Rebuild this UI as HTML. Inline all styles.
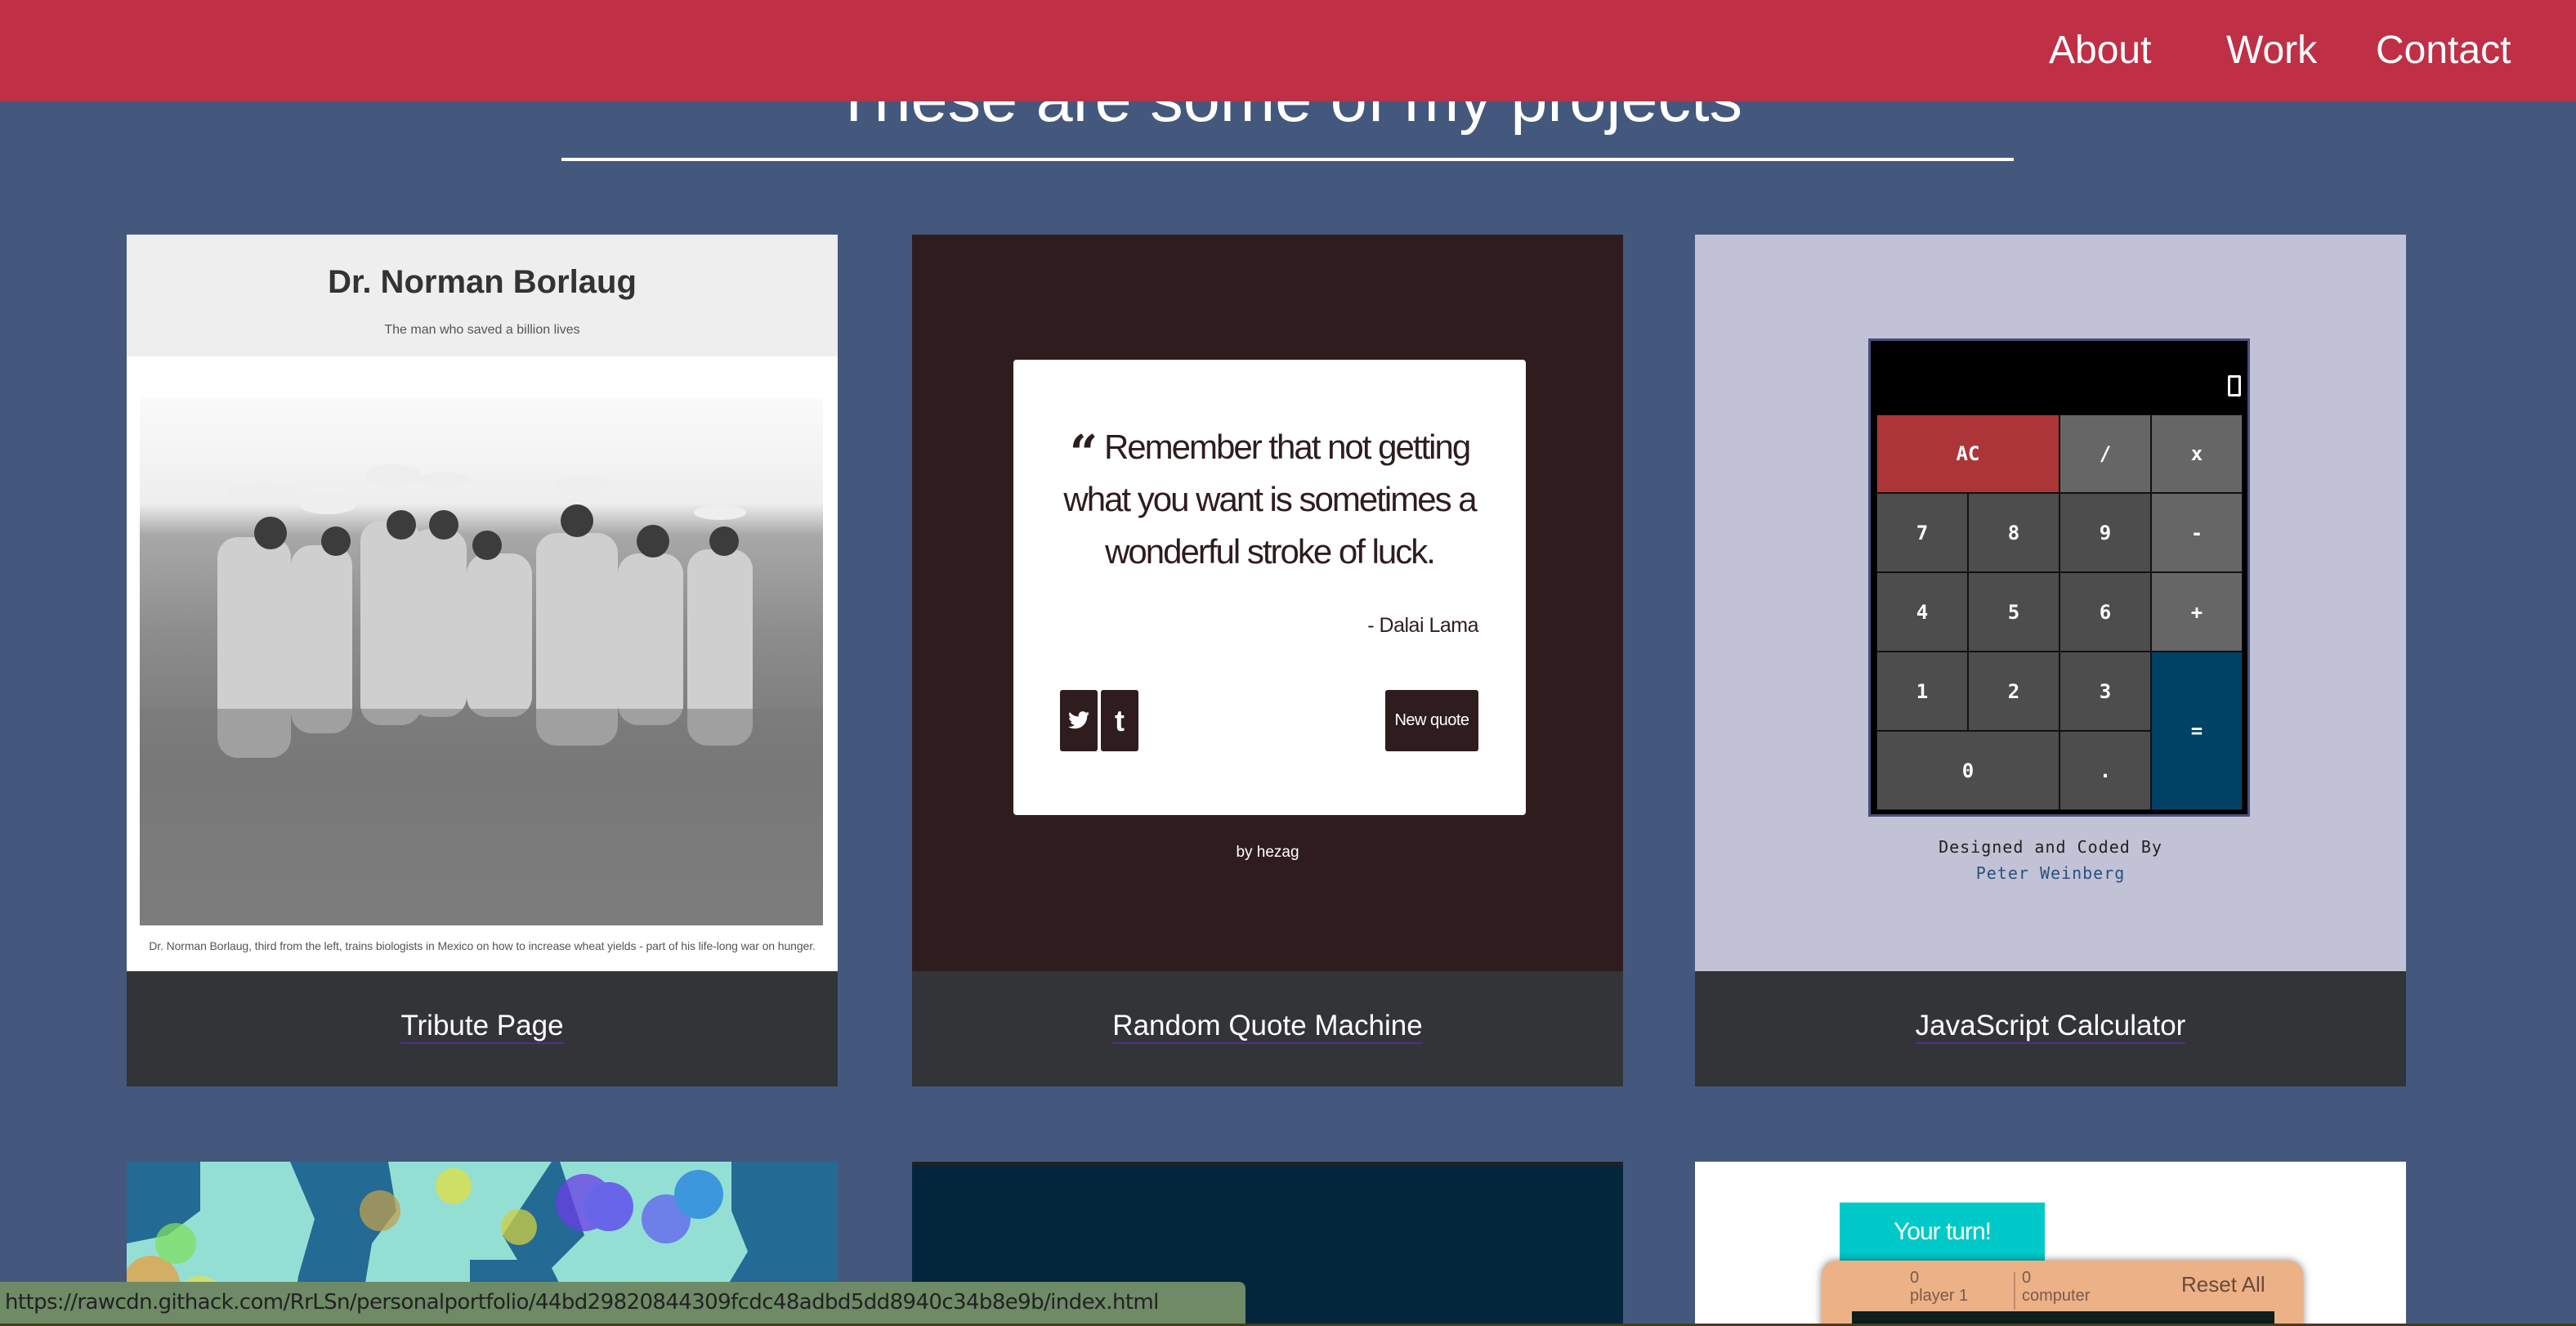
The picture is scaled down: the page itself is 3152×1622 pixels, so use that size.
<!DOCTYPE html>
<html><head><meta charset="utf-8"><style>
*{margin:0;padding:0;box-sizing:border-box}
html,body{width:3152px;height:1622px;overflow:hidden}
body{background:#44587d;font-family:"Liberation Sans",Arial,sans-serif;position:relative}
.abs{position:absolute}
.hdr{left:0;top:0;width:3152px;height:124px;background:#bf3046;z-index:5}
.nav{color:#fff;font-size:48px;top:34px;line-height:56px}
.title{left:0;width:3152px;top:76px;text-align:center;color:#fff;font-size:81px;line-height:90px;z-index:1}
.rule{left:687px;top:193px;width:1777px;height:4px;background:#fff}
.card{width:870px;height:1042px;top:287px;overflow:hidden}
.img{position:absolute;left:0;top:0;width:870px;height:901px;overflow:hidden}
.cap{position:absolute;left:0;top:901px;width:870px;height:141px;background:#333438;color:#fff;font-size:35px;text-align:center;line-height:133px}
.cap span{border-bottom:2px solid #5a2a8a;line-height:40px;display:inline-block}
.c2{width:870px;height:220px;top:1421px;overflow:hidden}
.calc div{position:absolute;color:#fff;font-family:"DejaVu Sans Mono","Liberation Mono",monospace;font-size:24px;font-weight:bold;display:flex;align-items:center;justify-content:center;border:1px solid #111}
</style></head><body>
<div class="abs hdr">
 <div class="abs nav" style="left:2507px">About</div>
 <div class="abs nav" style="left:2724px">Work</div>
 <div class="abs nav" style="left:2907px">Contact</div>
</div>
<div class="abs title">These are some of my projects</div>
<div class="abs rule"></div>

<!-- card 1 -->
<div class="abs card" style="left:155px">
 <div class="img" style="background:#fff">
  <div class="abs" style="left:0;top:0;width:870px;height:149px;background:#eeeeee"></div>
  <div class="abs" style="left:0;top:36px;width:870px;text-align:center;font-size:40px;font-weight:bold;color:#333">Dr. Norman Borlaug</div>
  <div class="abs" style="left:0;top:108px;width:870px;text-align:center;font-size:16px;color:#555">The man who saved a billion lives</div>
  <div class="abs" style="left:16px;top:200px;width:836px;height:645px;background:linear-gradient(180deg,#fafafa 0%,#eeeeee 20%,#a8a8a8 26%,#8c8c8c 45%,#767676 70%,#808080 100%)"></div>
  <svg class="abs" style="left:16px;top:200px" width="836" height="645">
   <g fill="#cfcfcf">
    <rect x="95" y="170" width="90" height="270" rx="25"/><rect x="185" y="180" width="75" height="230" rx="25"/>
    <rect x="270" y="150" width="75" height="250" rx="25"/><rect x="330" y="160" width="70" height="230" rx="25"/>
    <rect x="400" y="190" width="80" height="200" rx="25"/><rect x="485" y="165" width="100" height="260" rx="25"/>
    <rect x="585" y="190" width="80" height="210" rx="25"/><rect x="670" y="185" width="80" height="240" rx="25"/>
   </g>
   <g fill="#eee"><ellipse cx="150" cy="115" rx="45" ry="12"/><ellipse cx="230" cy="130" rx="35" ry="12"/><ellipse cx="310" cy="95" rx="35" ry="14"/><ellipse cx="372" cy="100" rx="34" ry="10"/><ellipse cx="540" cy="105" rx="34" ry="10"/><ellipse cx="710" cy="140" rx="32" ry="9"/></g>
   <g fill="#3c3c3c"><circle cx="160" cy="165" r="20"/><circle cx="240" cy="175" r="18"/><circle cx="320" cy="155" r="18"/><circle cx="372" cy="155" r="18"/><circle cx="425" cy="180" r="18"/><circle cx="535" cy="150" r="20"/><circle cx="628" cy="175" r="20"/><circle cx="715" cy="175" r="18"/></g>
   <rect x="0" y="380" width="836" height="265" fill="#7a7a7a" opacity=".55"/>
  </svg>
  <div class="abs" style="left:0;top:862px;width:870px;text-align:center;font-size:14px;color:#555;white-space:nowrap;letter-spacing:-0.1px">Dr. Norman Borlaug, third from the left, trains biologists in Mexico on how to increase wheat yields - part of his life-long war on hunger.</div>
 </div>
 <div class="cap"><span>Tribute Page</span></div>
</div>

<!-- card 2 -->
<div class="abs card" style="left:1116px">
 <div class="img" style="background:#2f1c1f">
  <div class="abs" style="left:124px;top:153px;width:627px;height:557px;background:#fff;border-radius:4px"></div>
  <div class="abs" style="left:124px;top:228px;width:627px;text-align:center;font-size:42px;line-height:64px;color:#2f1c1f;letter-spacing:-2px"><b style="font-family:'DejaVu Serif',serif;font-size:60px;line-height:40px;vertical-align:-14px">&#8220;</b> Remember that not getting<br>what you want is sometimes a<br>wonderful stroke of luck.</div>
  <div class="abs" style="left:400px;top:464px;width:293px;text-align:right;font-size:25px;color:#2f1c1f;letter-spacing:-0.5px">- Dalai Lama</div>
  <div class="abs" style="left:181px;top:557px;width:46px;height:75px;background:#2f1c1f;border-radius:3px;text-align:center">
   <svg width="26" height="24" viewBox="0 0 24 20" style="margin-top:25px"><path fill="#fff" d="M24 2.4a9.8 9.8 0 0 1-2.8.8A4.9 4.9 0 0 0 23.3.4a9.9 9.9 0 0 1-3.1 1.2A4.9 4.9 0 0 0 11.8 6 14 14 0 0 1 1.7.9a4.9 4.9 0 0 0 1.5 6.6A4.9 4.9 0 0 1 1 6.9v.1a4.9 4.9 0 0 0 3.9 4.8 4.9 4.9 0 0 1-2.2.1 4.9 4.9 0 0 0 4.6 3.4A9.9 9.9 0 0 1 0 17.3 14 14 0 0 0 7.5 19.5c9.1 0 14-7.5 14-14v-.6A10 10 0 0 0 24 2.4z"/></svg>
  </div>
  <div class="abs" style="left:231px;top:557px;width:46px;height:75px;background:#2f1c1f;border-radius:3px;color:#fff;font-size:36px;font-weight:bold;text-align:center;line-height:75px">t</div>
  <div class="abs" style="left:579px;top:557px;width:114px;height:75px;background:#2f1c1f;border-radius:3px;color:#fff;font-size:20px;text-align:center;line-height:75px;letter-spacing:-0.5px">New quote</div>
  <div class="abs" style="left:0;top:745px;width:870px;text-align:center;color:#fff;font-size:19px">by hezag</div>
 </div>
 <div class="cap"><span>Random Quote Machine</span></div>
</div>

<!-- card 3 -->
<div class="abs card" style="left:2074px">
 <div class="img" style="background:#c1c2d6">
  <div class="abs calc" style="left:212px;top:127px;width:467px;height:585px;background:#000;border:3px solid #4a4f7a">
   <span class="abs" style="right:8px;top:42px;width:16px;height:26px;border:3px solid #fff;border-radius:2px"></span>
   <div style="left:7px;top:90px;width:224px;height:96px;background:#ac3538">AC</div>
   <div style="left:231px;top:90px;width:112px;height:96px;background:#666">/</div>
   <div style="left:343px;top:90px;width:112px;height:96px;background:#666">x</div>
   <div style="left:7px;top:186px;width:112px;height:97px;background:#4d4d4d">7</div>
   <div style="left:119px;top:186px;width:112px;height:97px;background:#4d4d4d">8</div>
   <div style="left:231px;top:186px;width:112px;height:97px;background:#4d4d4d">9</div>
   <div style="left:343px;top:186px;width:112px;height:97px;background:#666">-</div>
   <div style="left:7px;top:283px;width:112px;height:97px;background:#4d4d4d">4</div>
   <div style="left:119px;top:283px;width:112px;height:97px;background:#4d4d4d">5</div>
   <div style="left:231px;top:283px;width:112px;height:97px;background:#4d4d4d">6</div>
   <div style="left:343px;top:283px;width:112px;height:97px;background:#666">+</div>
   <div style="left:7px;top:380px;width:112px;height:97px;background:#4d4d4d">1</div>
   <div style="left:119px;top:380px;width:112px;height:97px;background:#4d4d4d">2</div>
   <div style="left:231px;top:380px;width:112px;height:97px;background:#4d4d4d">3</div>
   <div style="left:343px;top:380px;width:112px;height:194px;background:#004266">=</div>
   <div style="left:7px;top:477px;width:224px;height:97px;background:#4d4d4d">0</div>
   <div style="left:231px;top:477px;width:112px;height:97px;background:#4d4d4d">.</div>
  </div>
  <div class="abs" style="left:0;top:733px;width:870px;text-align:center;font-family:'DejaVu Sans Mono',monospace;font-size:20px;line-height:32px;color:#222;letter-spacing:1px">Designed and Coded By<br><span style="color:#2c4f7c">Peter Weinberg</span></div>
 </div>
 <div class="cap"><span>JavaScript Calculator</span></div>
</div>

<!-- row 2 -->
<div class="abs c2" style="left:155px;background:#94dfd4">
 <svg width="870" height="220">
  <path fill="#236a94" d="M0 0h90v60l-40 30-50 10z"/>
  <path fill="#236a94" d="M200 0h120l10 60-30 40-20 120h-80l10-80 20-70z"/>
  <path fill="#236a94" d="M520 0h10l30 90-40 40 30 60-40 30h-40l20-80-30-50z"/>
  <path fill="#236a94" d="M740 0h130v220H720l10-60 30-50-20-50z"/>
  <path fill="#236a94" d="M420 120h70l40 40-50 60h-60z"/>
  <g opacity=".75"><circle cx="30" cy="150" r="35" fill="#e8a040"/><circle cx="60" cy="100" r="25" fill="#7fe060"/><circle cx="90" cy="170" r="30" fill="#e0e050"/><circle cx="310" cy="60" r="25" fill="#c0a050"/><circle cx="400" cy="30" r="22" fill="#e0e040"/><circle cx="560" cy="50" r="35" fill="#6a3de8"/><circle cx="590" cy="55" r="30" fill="#5a3df0"/><circle cx="660" cy="70" r="30" fill="#6060f0"/><circle cx="700" cy="40" r="30" fill="#2080e0"/><circle cx="645" cy="180" r="30" fill="#9040c0"/><circle cx="480" cy="80" r="22" fill="#d0d040"/></g>
 </svg>
</div>
<div class="abs c2" style="left:1116px;background:#03263d;border-top:4px solid #222"></div>
<div class="abs c2" style="left:2074px;background:#fff">
 <div class="abs" style="left:177px;top:50px;width:251px;height:71px;background:#00c9c9;color:#fff;font-size:30px;text-align:center;line-height:71px;letter-spacing:-1px">Your turn!</div>
 <div class="abs" style="left:155px;top:121px;width:589px;height:120px;background:#edb187;border-radius:18px 18px 0 0;box-shadow:0 0 10px rgba(0,0,0,.5)">
  <div class="abs" style="left:108px;top:10px;font-size:20px;color:#7a5a48;line-height:22px">0<br>player 1</div>
  <div class="abs" style="left:235px;top:14px;width:2px;height:46px;background:#c08a68"></div>
  <div class="abs" style="left:245px;top:10px;font-size:20px;color:#7a5a48;line-height:22px">0<br>computer</div>
  <div class="abs" style="left:440px;top:14px;font-size:26px;color:#6a4a3a">Reset All</div>
  <div class="abs" style="left:37px;top:62px;width:517px;height:60px;background:#0c1f1c"></div>
 </div>
</div>

<div class="abs" style="left:0;top:1568px;width:1524px;height:51px;background:#6f8a66;border-radius:0 8px 0 0;font-family:'DejaVu Sans',sans-serif;font-size:26px;color:#222;line-height:51px;padding-left:6px;letter-spacing:-0.6px;z-index:6">https://rawcdn.githack.com/RrLSn/personalportfolio/44bd29820844309fcdc48adbd5dd8940c34b8e9b/index.html</div>
<div class="abs" style="left:0;top:1619px;width:3152px;height:3px;background:#4a3b1a;z-index:7"></div>
</body></html>
